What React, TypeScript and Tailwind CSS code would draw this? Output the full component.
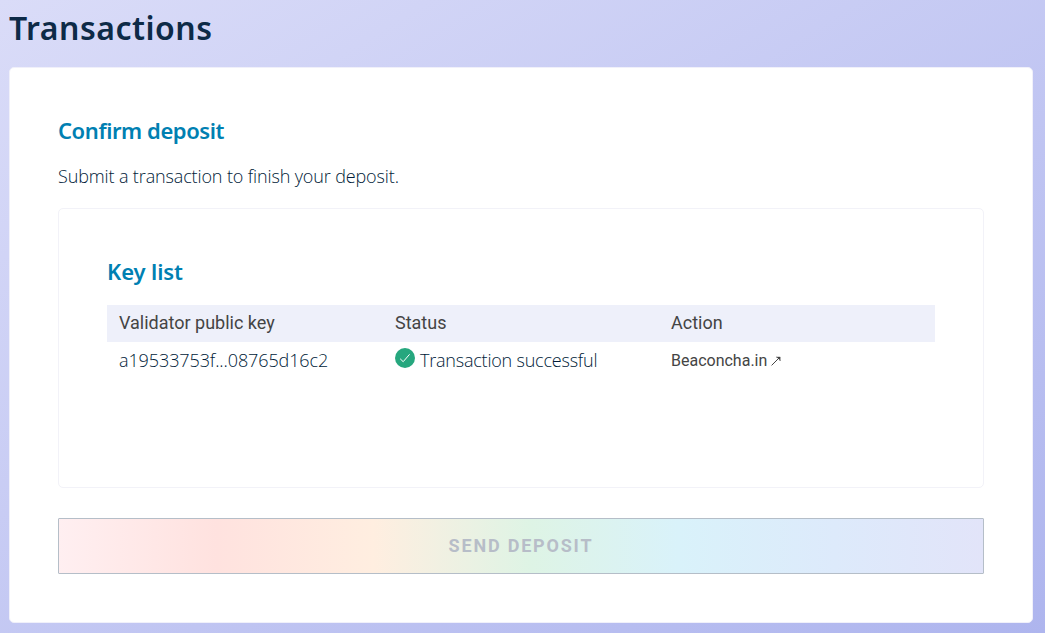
import React from "react";

function StatusIcon() {
  return (
    <svg width="20" height="20" viewBox="0 0 20 20" className="mt-[6px] shrink-0" aria-hidden="true">
      <circle cx="10" cy="10" r="10" fill="#26a77e" />
      <path d="M5.2 10.8 8.2 13.7 14.6 6.3" fill="none" stroke="#fff" strokeWidth="1" />
    </svg>
  );
}

function KeyTable() {
  return (
    <div className="mt-[18px] text-lg">
      <div className="grid h-[37px] grid-cols-3 bg-[#eef0fa] font-['Roboto',sans-serif] leading-[36px] text-[#444444]">
        <div className="px-3">Validator public key</div>
        <div className="px-3">Status</div>
        <div className="px-3">Action</div>
      </div>
      <div className="grid h-[37px] grid-cols-3 font-light text-[#001b38]">
        <div className="px-3 leading-[37px] tracking-[-0.1px]">a19533753f...08765d16c2</div>
        <div className="flex gap-[5px] px-3 leading-[37px] tracking-[-0.21px] whitespace-nowrap">
          <StatusIcon />
          <span>Transaction successful</span>
        </div>
        <a className="flex items-center px-3 font-['Roboto',sans-serif] text-base font-normal text-[#444444]">
          Beaconcha.in
          <svg width="10" height="10" viewBox="0 0 10 10" className="ml-1" aria-hidden="true">
            <path d="M.6 9.4 8 2" fill="none" stroke="#444444" strokeWidth="1" />
            <path d="M5.2 1H9.2V5L7.9 2.6Z" fill="#444444" stroke="#444444" strokeWidth=".4" />
          </svg>
        </a>
      </div>
    </div>
  );
}

export default function App() {
  return (
    <div className="h-[633px] w-[1045px] overflow-hidden bg-[linear-gradient(149deg,#dadcf8_0%,#aeb5ee_100%)] pl-[9px] font-['Noto_Sans',sans-serif] text-[#0d2a47]">
      <h1 className="h-[67px] text-[32px] leading-[56px] font-semibold tracking-[0.5px]">Transactions</h1>
      <main className="h-[556px] w-[1024px] rounded-[5px] border border-[#f0f0fa] bg-white px-12 pt-12">
        <h2 className="h-8 text-[22px] leading-[29px] font-semibold tracking-[-0.42px] text-[#0080b2]">Confirm deposit</h2>
        <p className="mt-[14px] h-[30px] font-['Open_Sans',sans-serif] text-lg leading-[28px] font-light tracking-[-0.13px] text-[#001b38]">Submit a transaction to finish your deposit.</p>
        <section className="mt-4 h-[280px] rounded-[5px] border border-[#f2f2f8] px-12 pt-12 font-['Open_Sans',sans-serif]">
          <h2 className="h-[30px] font-['Noto_Sans',sans-serif] text-[22px] leading-[28px] font-semibold tracking-[-0.1px] text-[#0080b2]">Key list</h2>
          <KeyTable />
        </section>
        <button
          disabled
          className="mt-[30px] h-14 w-full rounded-[1px] border border-[#b5bec8] bg-[linear-gradient(90deg,#ffeff1_0%,#ffe2df_17%,#ffeee0_34%,#def4e5_51%,#d9f2fa_67%,#ddeafb_84%,#e2e4f9_100%)] font-['Roboto',sans-serif] text-lg font-bold tracking-[1.8px] text-[#b7bdc8]"
        >
          SEND DEPOSIT
        </button>
      </main>
    </div>
  );
}
